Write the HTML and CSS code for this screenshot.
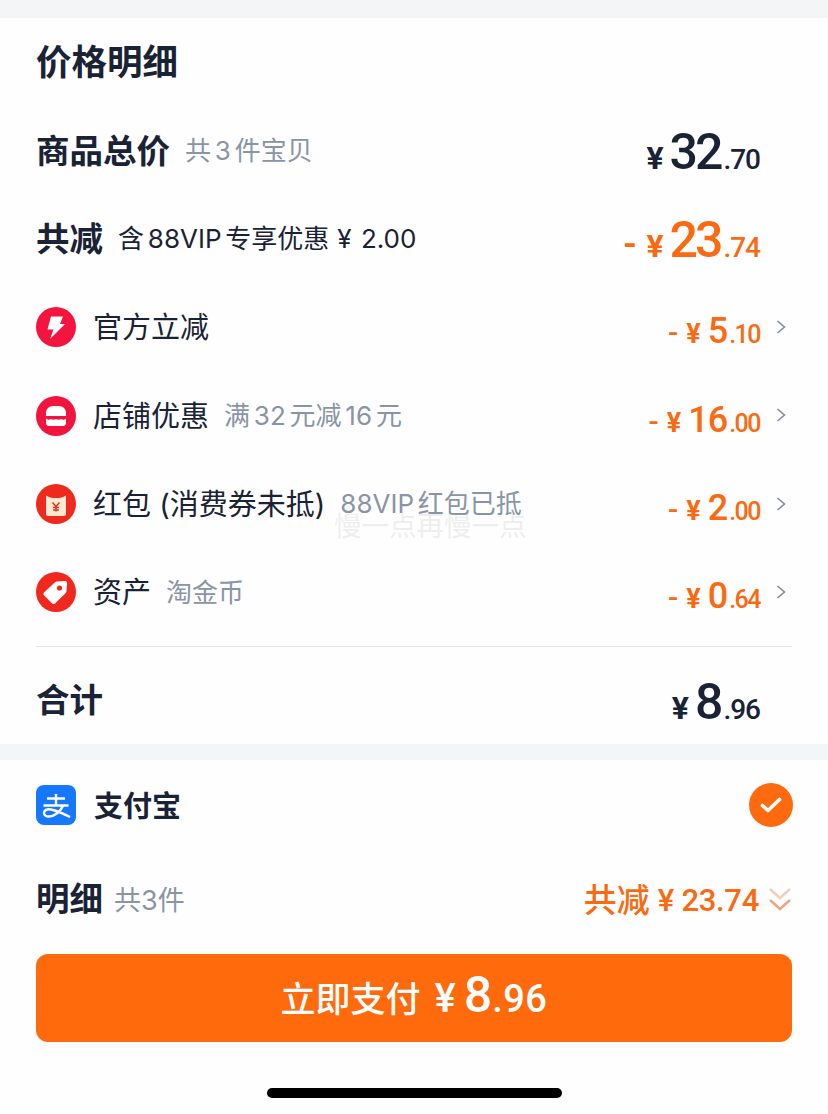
FILE: index.html
```html
<!DOCTYPE html>
<html lang="zh">
<head>
    <meta charset="UTF-8">
    <meta name="viewport" content="width=device-width, initial-scale=1.0">
    <title>价格明细</title>
    <link rel="stylesheet" href="styles.css">
</head>
<body>
    <div class="band band-top"></div>

    <!-- 价格明细 -->
    <div class="detail">
        <h1 class="title">价格明细</h1>

        <div class="row">
            <div class="label-group">
                <span class="label-strong">商品总价</span>
                <span class="note note-gap">共 3 件宝贝</span>
            </div>
            <div class="amount amount-big">
                <span class="yen">¥</span><span class="int">32</span><span class="dec">.70</span>
            </div>
        </div>

        <div class="row">
            <div class="label-group">
                <span class="label-strong">共减</span>
                <span class="note note-dark">含 88VIP 专享优惠<span class="note-money">¥ 2.00</span></span>
            </div>
            <div class="amount amount-big orange">
                <span class="minus">-</span><span class="yen">¥</span><span class="int">23</span><span class="dec">.74</span>
            </div>
        </div>

        <div class="items">
            <div class="row row-item">
                <div class="label-group">
                    <svg class="icon" viewBox="0 0 40 40">
                        <circle cx="20" cy="20" r="20" fill="#f5133f"/>
                        <path d="M15 9.500h12l-3 7.500h5L14 32l3.500-9.500h-6z" fill="#fff"/>
                    </svg>
                    <span class="label">官方立减</span>
                </div>
                <div class="amount orange">
                    <span class="minus">-</span><span class="yen">¥</span><span class="int">5</span><span class="dec">.10</span>
                </div>
                <svg class="chev" viewBox="0 0 10 14"><path d="M1.500 1l7 6-7 6"/></svg>
            </div>

            <div class="row row-item">
                <div class="label-group">
                    <svg class="icon" viewBox="0 0 40 40">
                        <circle cx="20" cy="20" r="20" fill="#f0143f"/>
                        <path d="M10 20v-3c0-4 3-7 7-7h6c4 0 7 3 7 7v3z" fill="#fff"/>
                        <path d="M10 22.500c2 1.500 3.500 1.500 5 .5 1.500 1 3.500 1 5 0 1.500 1 3.500 1 5 0 1.500 1 3.500 1 5-.5v4c0 2-1 3.500-3 3.500H13c-2 0-3-1.500-3-3.500z" fill="#fff"/>
                    </svg>
                    <span class="label">店铺优惠</span>
                    <span class="note note-gap">满 32 元减 16 元</span>
                </div>
                <div class="amount orange">
                    <span class="minus">-</span><span class="yen">¥</span><span class="int">16</span><span class="dec">.00</span>
                </div>
                <svg class="chev" viewBox="0 0 10 14"><path d="M1.500 1l7 6-7 6"/></svg>
            </div>

            <div class="row row-item">
                <div class="label-group">
                    <svg class="icon" viewBox="0 0 40 40">
                        <circle cx="20" cy="20" r="20" fill="#ee2a1e"/>
                        <rect x="10" y="8" width="20" height="24" rx="2" fill="#fde9cf"/>
                        <path d="M10 8h20v4c-5 3.500-15 3.500-20 0z" fill="#ee2a1e"/>
                        <path d="M10 12c5 3.500 15 3.500 20 0" fill="none" stroke="#fde9cf" stroke-width="1"/>
                        <path d="M16.500 18.500l3.500 4 3.500-4M20 22.500v5M17 23.500h6M17 26h6" fill="none" stroke="#d8372a" stroke-width="1.500"/>
                    </svg>
                    <span class="label">红包 (消费券未抵)</span>
                    <span class="note note-gap">88VIP 红包已抵</span>
                </div>
                <div class="amount orange">
                    <span class="minus">-</span><span class="yen">¥</span><span class="int">2</span><span class="dec">.00</span>
                </div>
                <svg class="chev" viewBox="0 0 10 14"><path d="M1.500 1l7 6-7 6"/></svg>
                <span class="watermark">慢一点再慢一点</span>
            </div>

            <div class="row row-item">
                <div class="label-group">
                    <svg class="icon" viewBox="0 0 40 40">
                        <circle cx="20" cy="20" r="20" fill="#f0281e"/>
                        <path d="M21 9.500l8-.5c1.200 0 2 .8 2 2l-.5 8c0 .8-.3 1.400-.8 2L19 31.500c-.8.800-2 .8-2.800 0L8 23.300c-.8-.8-.8-2 0-2.800l11-10.200c.6-.5 1.200-.8 2-.8z" fill="#fff"/>
                        <circle cx="23.500" cy="16" r="2.600" fill="#f0281e"/>
                    </svg>
                    <span class="label">资产</span>
                    <span class="note note-gap">淘金币</span>
                </div>
                <div class="amount orange">
                    <span class="minus">-</span><span class="yen">¥</span><span class="int">0</span><span class="dec">.64</span>
                </div>
                <svg class="chev" viewBox="0 0 10 14"><path d="M1.500 1l7 6-7 6"/></svg>
            </div>
        </div>

        <div class="divider"></div>

        <div class="row">
            <div class="label-group">
                <span class="label-strong">合计</span>
            </div>
            <div class="amount amount-big">
                <span class="yen">¥</span><span class="int">8</span><span class="dec">.96</span>
            </div>
        </div>
    </div>

    <div class="band"></div>

    <!-- 支付方式 -->
    <div class="pay">
        <div class="pay-row">
            <div class="label-group">
                <svg class="icon" viewBox="0 0 40 40">
                    <rect width="40" height="40" rx="8" fill="#1677ff"/>
                    <path d="M11 13.500h18M20 9v11.500M7.500 20.500h25" fill="none" stroke="#fff" stroke-width="2.400"/>
                    <path d="M27 20.500c-2 6-9 11-14 11-3 0-5-1.500-5-3.500 0-2.800 3-4.500 7-3.500 5 1 12 4 19 7.500" fill="none" stroke="#fff" stroke-width="2.400"/>
                </svg>
                <span class="label-pay">支付宝</span>
            </div>
            <svg class="check" viewBox="0 0 44 44">
                <circle cx="22" cy="22" r="22" fill="#ff6a0e"/>
                <path d="M13.500 22.500l5.500 5 11.500-11" fill="none" stroke="#fff" stroke-width="3.600" stroke-linecap="round" stroke-linejoin="round"/>
            </svg>
        </div>

        <div class="sum-row">
            <div class="label-group">
                <span class="label-strong">明细</span>
                <span class="note note-tight">共3件</span>
            </div>
            <div class="sum-right">
                <span class="sum-label">共减</span>
                <span class="sum-num">¥ 23.74</span>
                <svg class="double" viewBox="0 0 24 24">
                    <path d="M2 2l10 9 10-9" stroke="#f3cdb8"/>
                    <path d="M2 13l10 9 10-9" stroke="#f0a57c"/>
                </svg>
            </div>
        </div>

        <button class="pay-btn">
            <span class="btn-text">立即支付</span><span class="btn-yen">¥</span><span class="btn-int">8</span><span class="btn-dec">.96</span>
        </button>
    </div>

    <div class="home-wrap"><div class="home-bar"></div></div>
</body>
</html>
```

FILE: styles.css
```css
/* 기본 */
body {
    margin: 0;
    width: 828px;
    height: 1114px;
    overflow: hidden;
    background-color: #fefefe;
    color: #1a2235;
    font-family: Inter, "Noto Sans CJK SC", sans-serif;
}

.band {
    height: 16px;
    background-color: #f4f5f6;
}

.band-top {
    height: 18px;
}

/* 价格明细 */
.detail {
    padding: 0 36px;
}

.title {
    margin: 0;
    height: 88px;
    line-height: 90px;
    font-size: 35.500px;
    font-weight: 700;
}

.row {
    position: relative;
    display: flex;
    align-items: center;
    height: 88px;
    padding-right: 32px;
}

.items {
    padding-top: 1px;
}

.row-item {
    height: 88.400px;
}

.label-group {
    display: flex;
    align-items: center;
    flex: 1;
}

.label-strong,
.label,
.note {
    padding-bottom: 4px;
}

.label-strong {
    font-size: 33.500px;
    font-weight: 700;
}

.label {
    margin-left: 17px;
    font-size: 29px;
}

.note {
    font-size: 26px;
    word-spacing: -3.500px;
    color: #8a94a6;
}

.note-gap {
    margin-left: 15px;
}

.note-dark {
    margin-left: 15px;
    color: #1a2235;
}

.note-money {
    margin-left: 8px;
    word-spacing: 2px;
}

.note-tight {
    margin-left: 11px;
    padding-bottom: 0;
    font-size: 27px;
}

.icon {
    width: 40px;
    height: 40px;
    flex-shrink: 0;
}

/* 금액 */
.amount {
    display: flex;
    align-items: baseline;
    padding-top: 8px;
    font-family: Roboto, sans-serif;
    font-weight: 500;
    font-size: 27px;
}

.amount .yen {
    font-weight: 700;
}

.amount .int {
    font-size: 36px;
    margin-left: 7px;
    letter-spacing: -1px;
}

.amount .dec {
    margin-left: 2px;
    font-size: 25px;
    letter-spacing: -1.500px;
}

.amount .minus {
    margin-right: 8px;
    font-size: 30px;
}

.amount-big {
    padding-top: 4px;
    font-size: 32px;
}

.amount-big .int {
    font-size: 50px;
    margin-left: 6px;
    letter-spacing: -3px;
}

.amount-big .dec {
    margin-left: 3px;
    font-size: 28px;
    letter-spacing: -1px;
}

.amount-big .minus {
    margin-right: 10px;
    font-size: 38px;
}

.orange {
    color: #f96a12;
}

.chev {
    position: absolute;
    top: 37px;
    right: 6px;
    width: 10px;
    height: 14px;
    fill: none;
    stroke: #7d8798;
    stroke-width: 1.500;
}

.watermark {
    position: absolute;
    left: 298px;
    top: 44px;
    font-size: 27.500px;
    color: #000;
    opacity: 0.06;
    white-space: nowrap;
}

.divider {
    height: 1px;
    margin: 9.400px 0 9px;
    background-color: #e3e5e9;
}

/* 支付方式 */
.pay {
    padding: 0 36px;
}

.pay-row {
    display: flex;
    align-items: center;
    justify-content: space-between;
    height: 90px;
}

.label-pay {
    margin-left: 18px;
    padding-bottom: 2px;
    font-size: 29px;
    font-weight: 700;
}

.check {
    width: 44px;
    height: 44px;
    margin-right: -1px;
}

.sum-row {
    display: flex;
    align-items: center;
    height: 98px;
    margin-bottom: 6px;
}

.sum-right {
    display: flex;
    align-items: center;
    color: #f96a12;
}

.sum-label {
    padding-bottom: 1px;
    font-family: "Noto Sans CJK SC", sans-serif;
    font-size: 33px;
    font-weight: 500;
}

.sum-num {
    margin-left: 8px;
    padding-top: 3px;
    font-family: Roboto, sans-serif;
    font-size: 31px;
    font-weight: 500;
    letter-spacing: -0.300px;
}

.double {
    width: 24px;
    height: 24px;
    margin-left: 9px;
    fill: none;
    stroke-width: 2.500;
}

.pay-btn {
    display: flex;
    align-items: baseline;
    justify-content: center;
    width: 100%;
    height: 88px;
    padding: 12px 0 0;
    border: none;
    border-radius: 12px;
    background-color: #ff6a0c;
    color: #fff;
    font-family: "Noto Sans CJK SC", sans-serif;
}

.btn-text {
    font-size: 35px;
    font-weight: 500;
}

.btn-yen,
.btn-int,
.btn-dec {
    font-family: Roboto, sans-serif;
    font-weight: 500;
}

.btn-yen {
    margin-left: 14px;
    font-size: 40px;
}

.btn-int {
    margin-left: 8px;
    font-size: 50px;
}

.btn-dec {
    font-size: 38px;
    letter-spacing: 0.500px;
}

.home-wrap {
    display: flex;
    justify-content: center;
    padding-top: 46px;
}

.home-bar {
    width: 295px;
    height: 10px;
    border-radius: 5px;
    background-color: #000;
}
```
